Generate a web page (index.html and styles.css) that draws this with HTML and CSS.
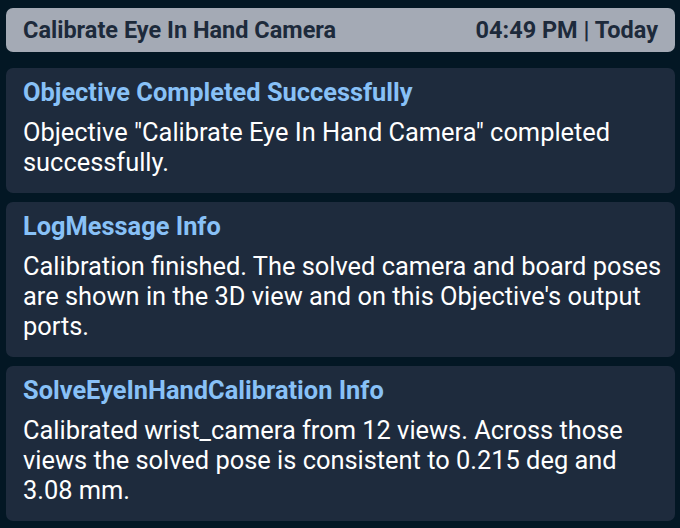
FILE: index.html
```html
<!DOCTYPE html>
<html>
<head>
<meta charset="utf-8">
<link rel="stylesheet" href="styles.css">
</head>
<body>
<div class="panel">
  <div class="header">
    <span class="header-title">Calibrate Eye In Hand Camera</span>
    <span class="header-time">04:49 PM | Today</span>
  </div>
  <div class="list">
    <div class="card">
      <div class="card-title">Objective Completed Successfully</div>
      <div class="card-body">Objective "Calibrate Eye In Hand Camera" completed successfully.</div>
    </div>
    <div class="card">
      <div class="card-title">LogMessage Info</div>
      <div class="card-body">Calibration finished. The solved camera and board poses are shown in the 3D view and on this Objective's output ports.</div>
    </div>
    <div class="card">
      <div class="card-title">SolveEyeInHandCalibration Info</div>
      <div class="card-body">Calibrated wrist_camera from 12 views. Across those views the solved pose is consistent to 0.215 deg and 3.08 mm.</div>
    </div>
  </div>
</div>
</body>
</html>
```
FILE: styles.css
```css
html, body {
  margin: 0;
  padding: 0;
  background: #031724;
}
body {
  font-family: Roboto, "Noto Sans", sans-serif;
  width: 680px;
  height: 528px;
  overflow: hidden;
}
.panel {
  padding: 8px 5px 0 6px;
}
.header {
  display: flex;
  justify-content: space-between;
  align-items: center;
  height: 44px;
  box-sizing: border-box;
  padding: 0 17px;
  background: #a4aab5;
  border-radius: 7px;
  color: #1d2a3b;
  font-size: 23.5px;
  font-weight: 700;
}
.list {
  display: flex;
  flex-direction: column;
  gap: 9px;
  margin-top: 16px;
}
.card {
  background: #1e2b3d;
  border-radius: 7px;
  padding: 9px 10px 16px 17px;
}
.card-title {
  color: #88c1f7;
  font-size: 25.4px;
  font-weight: 700;
  line-height: 30px;
  margin-bottom: 10px;
}
.card-body {
  color: #ffffff;
  font-size: 25.4px;
  line-height: 30px;
}
```
